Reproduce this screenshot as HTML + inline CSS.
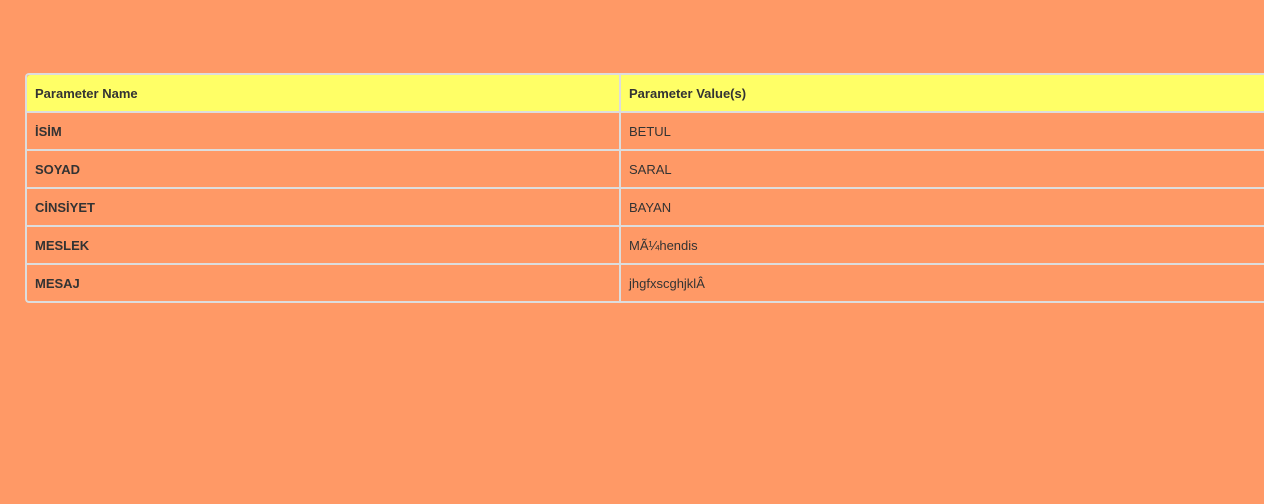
<!DOCTYPE html>
<html><head><meta charset="utf-8"><style>
html,body{margin:0;padding:0;background:#ff9966;width:1264px;height:504px;overflow:hidden;font-family:"Liberation Sans",Arial,sans-serif;font-size:13px;color:#333}
table{position:absolute;left:25px;top:73px;width:1260px;border-collapse:separate;border-spacing:0;border:2px solid #ddd;border-right:none;border-radius:4px 0 0 4px}
td{height:36px;padding:0 0 0 8px;border-bottom:2px solid #ddd;vertical-align:middle}
tr:last-child td{border-bottom:none}
td:first-child{width:584px;border-right:2px solid #ddd;font-weight:bold}
tr.h td{background:#ffff66;font-weight:bold}
tr.h td:first-child{border-radius:3px 0 0 0}
</style></head><body>
<table>
<tr class="h"><td>Parameter Name</td><td>Parameter Value(s)</td></tr>
<tr><td>İSİM</td><td>BETUL</td></tr>
<tr><td>SOYAD</td><td>SARAL</td></tr>
<tr><td>CİNSİYET</td><td>BAYAN</td></tr>
<tr><td>MESLEK</td><td>MÃ¼hendis</td></tr>
<tr><td>MESAJ</td><td>jhgfxscghjklÂ</td></tr>
</table>
</body></html>
